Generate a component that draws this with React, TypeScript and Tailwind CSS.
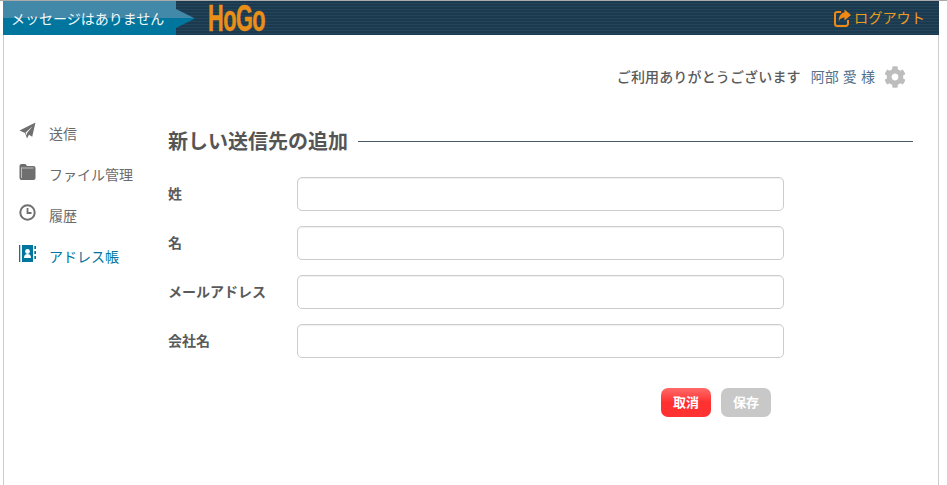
import { FaCog } from "react-icons/fa";

const SendIcon = () => (
  <svg width="17" height="17" viewBox="0 0 17 17" fill="currentColor">
    <path d="M16.5 0.5 0.5 8.5 6 11 8 16.5 10 12.8 13.2 14.8ZM13.5 4.5 6.6 10.4 7.6 13.4 8 11Z" fillRule="evenodd" />
  </svg>
);

const FolderIcon = () => (
  <svg width="17" height="18" viewBox="0 0 17 18">
    <path d="M2.5 1h4l1.5 2h6.5a2 2 0 0 1 2 2v10a2 2 0 0 1-2 2h-12a2 2 0 0 1-2-2V3a2 2 0 0 1 2-2Z" fill="#6f6f6f" />
    <path d="M2 4.2V15h1V4.2Z" fill="#ffffff" fillOpacity="0.55" />
    <path d="M3 4.6h11.5V5.4H3Z" fill="#ffffff" fillOpacity="0.7" />
  </svg>
);

const ClockIcon = () => (
  <svg width="17" height="17" viewBox="0 0 17 17" fill="none" stroke="#6f6f6f">
    <circle cx="8.5" cy="8.5" r="7.2" strokeWidth="2" />
    <path d="M8.5 4v5h4" strokeWidth="1.8" />
  </svg>
);

const AddressBookIcon = () => (
  <svg width="17" height="17" viewBox="0 0 17 17">
    <path d="M0 0h1.3v17H0Z" fill="#00769f" />
    <path d="M3 0h11v17H3Z" fill="#00769f" />
    <path d="M15.3 1h1.7v3h-1.7ZM15.3 6h1.7v3h-1.7ZM15.3 11h1.7v3h-1.7Z" fill="#00769f" />
    <circle cx="8.5" cy="6.5" r="2.4" fill="#ffffff" />
    <path d="M5 13c0-2.6 1.2-4 3.5-4s3.5 1.4 3.5 4Z" fill="#ffffff" />
  </svg>
);

const LogoutIcon = () => (
  <svg width="17" height="18" viewBox="0 0 17 18" fill="none">
    <path d="M7 3H3.3A2.3 2.3 0 0 0 1 5.3v9.4A2.3 2.3 0 0 0 3.3 17h8.4a2.3 2.3 0 0 0 2.3-2.3V11" stroke="#f08a14" strokeWidth="2" />
    <path d="M10.5 0.5 17 6l-6.5 5.5V8.5C8 8.5 5.8 9.5 4.8 12.5 4.5 7.5 7 4 10.5 3.6Z" fill="#f08a14" />
  </svg>
);

const navItems = [
  { label: "送信", icon: <SendIcon />, active: false },
  { label: "ファイル管理", icon: <FolderIcon />, active: false },
  { label: "履歴", icon: <ClockIcon />, active: false },
  { label: "アドレス帳", icon: <AddressBookIcon />, active: true },
];

const fields = ["姓", "名", "メールアドレス", "会社名"];

const Header = () => (
  <header className="flex h-[34px] items-stretch bg-[#1b3a50] bg-[repeating-linear-gradient(180deg,#1b3a50_0px,#1b3a50_2px,#234559_2px,#234559_3px)]">
    <div className="relative flex w-[173px] items-center bg-[linear-gradient(180deg,#4188a9_0px,#4188a9_17px,#00769f_17px,#00769f_34px)] pl-2">
      <span className="text-sm text-[#f2f7fa]">メッセージはありません</span>
      <div className="absolute top-[8px] left-[173px] h-[19px] w-[19px] bg-[linear-gradient(180deg,#4188a9_0px,#4188a9_9px,#00769f_9px,#00769f_19px)] [clip-path:polygon(0_0,100%_50%,0_100%)]" />
    </div>
    <div className="ml-[16px] flex shrink-0 items-center">
      <span className="inline-block origin-center scale-x-[0.64] scale-y-[1.1] font-['Liberation_Sans',sans-serif] text-[34px] leading-none font-bold tracking-tight text-[#e98f17] [-webkit-text-stroke:0.5px_#e98f17]">
        HoGo
      </span>
    </div>
    <a className="ml-auto flex items-center gap-[3px] pr-[14px] text-[14.2px] text-[#ee9a1e]">
      <LogoutIcon />
      ログアウト
    </a>
  </header>
);

const Sidebar = () => (
  <nav className="flex w-[164px] shrink-0 flex-col gap-[20px] pt-[2px] pl-[15px]">
    {navItems.map((item) => (
      <div
        key={item.label}
        className={`flex h-[21px] items-center gap-[13px] text-sm ${item.active ? "text-[#00769f]" : "text-[#6b6b6b]"}`}
      >
        <span className="flex w-[17px] -translate-y-[2px] justify-center text-[#6f6f6f]">{item.icon}</span>
        {item.label}
      </div>
    ))}
  </nav>
);

const FormRow = ({ label }: { label: string }) => (
  <div className="flex items-center">
    <label className="w-[129px] shrink-0 pb-[2px] text-sm font-bold text-[#5a5a5a]">{label}</label>
    <input className="h-[34px] w-[487px] rounded-[5px] border border-[#cccccc] bg-white shadow-[inset_0_1px_1px_rgba(0,0,0,0.06)]" />
  </div>
);

const App = () => {
  return (
    <div className="h-[485px] w-[947px] overflow-hidden border-t border-[#aaaaaa] bg-white font-['Noto_Sans_CJK_JP','Noto_Sans',sans-serif]">
      <div className="ml-[3px] w-[936px]">
        <Header />
        <div className="h-[450px] border-x border-[#cccccc]">
          <div className="flex h-[85px] items-start justify-end pt-[31px] pr-[32px]">
            <div className="flex h-[22px] items-center">
              <span className="pb-[2px] text-sm font-medium tracking-[0.15px] text-[#5a5a5a]">ご利用ありがとうございます</span>
              <span className="ml-[10px] pb-[2px] text-sm text-[#56708a] [word-spacing:1px]">阿部 愛 様</span>
              <FaCog size={22} className="ml-[9px] text-[#bdbdbd]" />
            </div>
          </div>
          <div className="flex">
            <Sidebar />
            <main className="flex-1 pr-[25px]">
              <div className="flex items-center gap-[10px] pt-[7px]">
                <h1 className="text-xl leading-7 font-bold text-[#555555]">新しい送信先の追加</h1>
                <div className="h-px flex-1 bg-[#4a5a66]" />
              </div>
              <form className="mt-[22px] flex flex-col gap-[15px]">
                {fields.map((field) => (
                  <FormRow key={field} label={field} />
                ))}
              </form>
              <div className="mt-[30px] ml-[493px] flex gap-[10px]">
                <button className="h-[29px] w-[50px] rounded-[7px] bg-[linear-gradient(180deg,#ff6a6a_0%,#ff3030_50%,#ff3333_100%)] pb-[2px] text-[13px] font-bold text-white">
                  取消
                </button>
                <button className="h-[29px] w-[50px] rounded-[7px] bg-[#c8c8c8] pb-[2px] text-[13px] font-bold text-white">
                  保存
                </button>
              </div>
            </main>
          </div>
        </div>
      </div>
    </div>
  );
};

export default App;
